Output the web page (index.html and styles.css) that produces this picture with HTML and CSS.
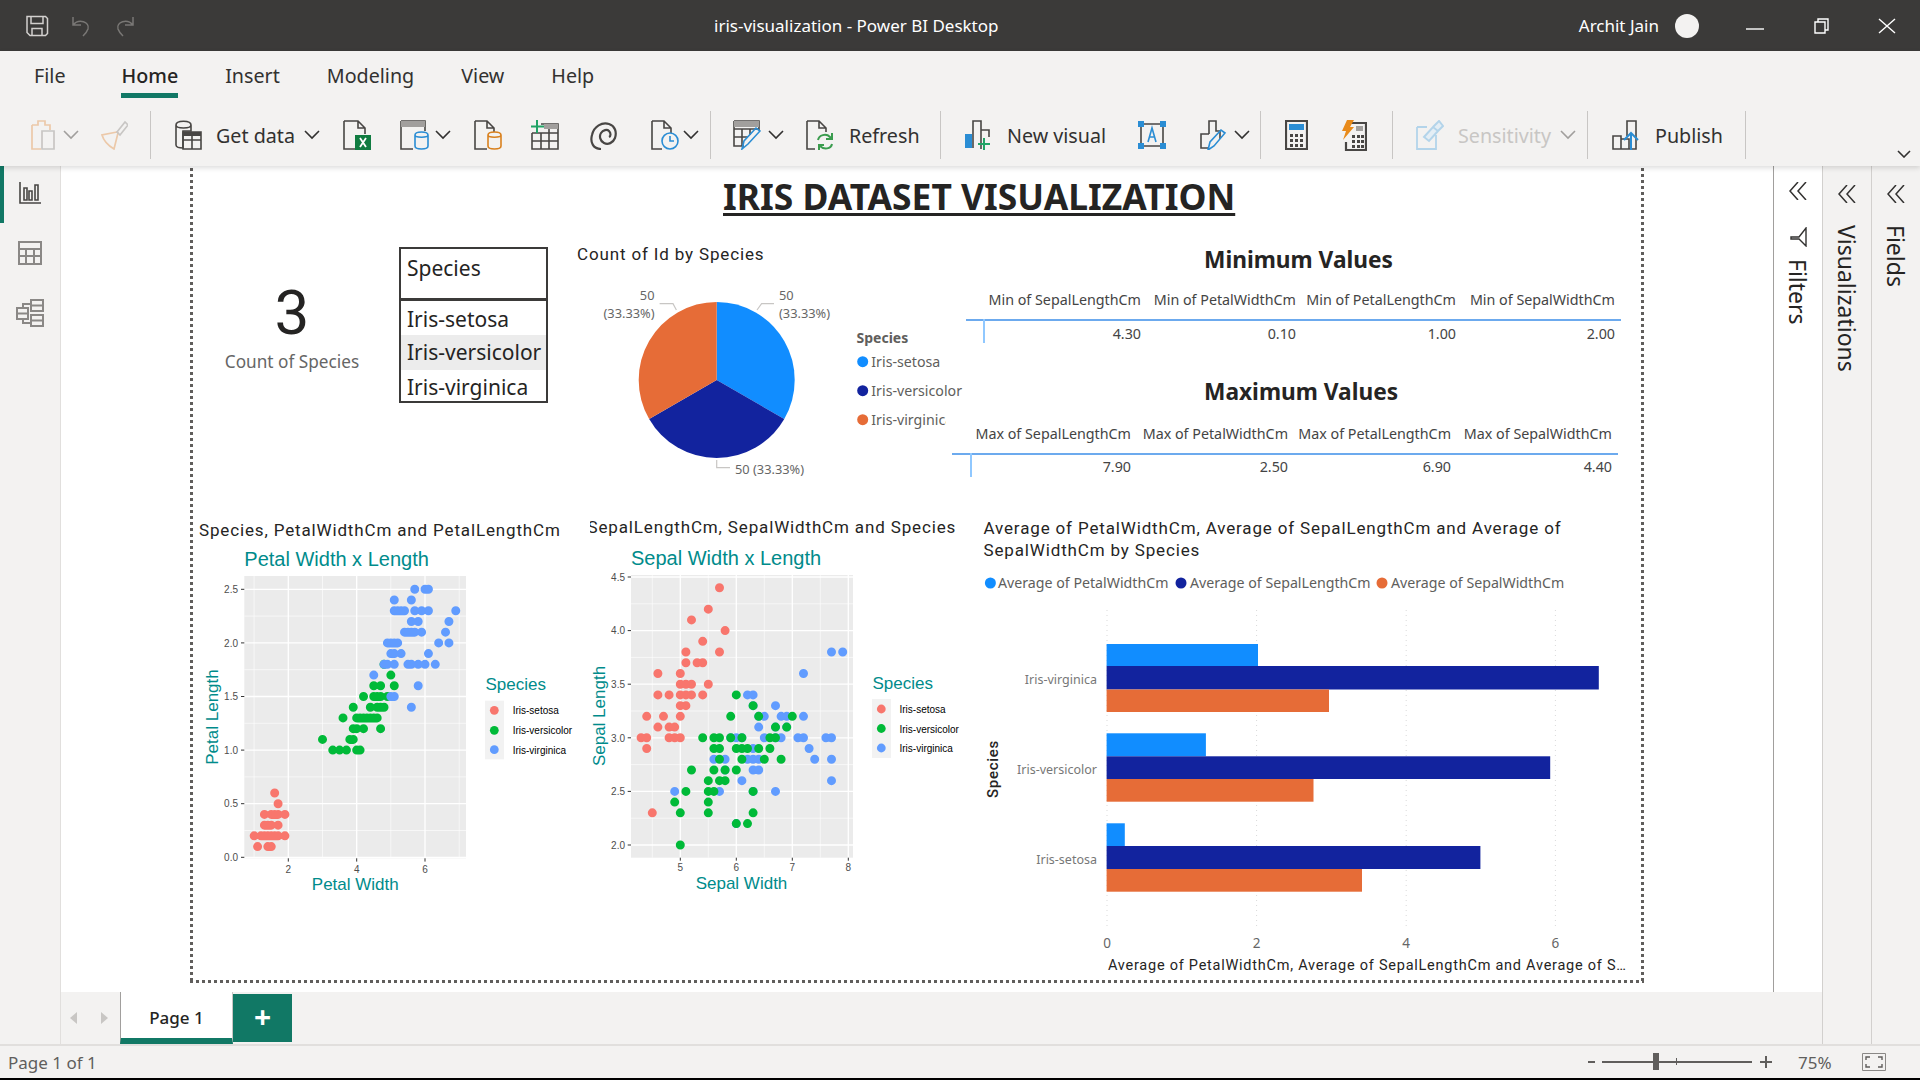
FILE: index.html
```html
<!DOCTYPE html>
<html lang="en">
<head>
<meta charset="utf-8">
<title>iris-visualization - Power BI Desktop</title>
<link rel="stylesheet" href="styles.css">
</head>
<body>
<div class="app">
  <header class="titlebar">
    <div class="qat">
      <svg class="ic-save" width="24" height="22" viewBox="0 0 24 22"><path d="M2 1.5h18.500l2 2v15l-2 2H5l-3-3z M6 1.500v7h12v-7 M7 20.500v-7h10v7" /></svg>
      <svg class="ic-undo" width="22" height="22" viewBox="0 0 22 22"><path d="M2 2v8h8M2 10c6-7 17-3 15 4-1 3-3 5-5 7"/></svg>
      <svg class="ic-redo" width="22" height="22" viewBox="0 0 22 22"><path d="M20 2v8h-8M20 10c-6-7-17-3-15 4 1 3 3 5 5 7"/></svg>
    </div>
    <div class="doc-title">iris-visualization - Power BI Desktop</div>
    <div class="account">
      <span class="user">Archit Jain</span>
      <span class="avatar"></span>
      <svg class="win win-min" width="18" height="4" viewBox="0 0 18 4"><path d="M0 2h18"/></svg>
      <svg class="win win-res" width="18" height="16" viewBox="0 0 18 16"><path d="M3 4h10v11H3zM6 4V1h10v11h-3"/></svg>
      <svg class="win win-close" width="18" height="16" viewBox="0 0 18 16"><path d="M1 1l16 14M17 1L1 15"/></svg>
    </div>
  </header>

  <section class="ribbon">
    <nav class="tabs">
      <span class="tab tab-file">File</span>
      <span class="tab tab-on">Home</span>
      <span class="tab">Insert</span>
      <span class="tab">Modeling</span>
      <span class="tab">View</span>
      <span class="tab">Help</span>
    </nav>
    <div class="toolbar">
      <svg class="m29" width="29" height="30" viewBox="0 0 29 30"><path class="ln-o" d="M3 5h6V1h7v4h5v5M3 5v24h9"/><path class="ln-g" d="M13 11h12v18H13z"/></svg>
      <svg class="chev m5 dim" width="16" height="10" viewBox="0 0 16 10"><path d="M1 1l7 7 7-7"/></svg>
      <svg class="m21" width="28" height="30" viewBox="0 0 28 30"><path class="ln-o" d="M17 12L2 15c2 7 7 11 12 14l4-16z"/><path class="ln-g" d="M17 12l8-10 3 3-8 10z"/></svg>
      <span class="sep m22"></span>

      <svg class="m23" width="28" height="30" viewBox="0 0 28 30"><path class="ln" d="M2 5c0-5 15-5 15 0v6H9v17c-4 0-7-1-7-3zM2 5c0 4 15 4 15 0"/><path class="ln" d="M9 12h18v17H9zM9 20h18M18 12v17"/><path class="fill-d" d="M9 12h18v4H9z"/></svg>
      <span class="lbl m14 l-get">Get data</span>
      <svg class="chev" width="16" height="10" viewBox="0 0 16 10"><path d="M1 1l7 7 7-7"/></svg>
      <svg class="m23" width="28" height="30" viewBox="0 0 28 30"><path class="ln" d="M1 1h14l7 7v6M15 1v7h7M1 1v28h11"/><path class="fill-x" d="M12 15h16v15H12z"/><path class="ln-w" d="M17 18l6 9M23 18l-6 9"/></svg>
      <svg class="m29" width="29" height="30" viewBox="0 0 29 30"><path class="ln" d="M1 1h24v10M1 1v28h12"/><path class="fill-g" d="M1 1h24v6H1z"/><path class="ln-b" d="M15 15c0-4 13-4 13 0v11c0 4-13 4-13 0zM15 15c0 3 13 3 13 0"/></svg>
      <svg class="chev m6" width="16" height="10" viewBox="0 0 16 10"><path d="M1 1l7 7 7-7"/></svg>
      <svg class="m23" width="28" height="30" viewBox="0 0 28 30"><path class="ln" d="M1 1h12l7 7v4M13 1v7h7M1 1v28h12"/><path class="ln-a" d="M14 15c0-4 13-4 13 0v11c0 4-13 4-13 0zM14 15c0 3 13 3 13 0"/></svg>
      <svg class="m29" width="28" height="30" viewBox="0 0 28 30"><path class="ln" d="M10 4h17v25H1V13M1 13h26M1 21h26M10 13v16M18 4v25"/><path class="fill-g" d="M13 4h14v5H13z"/><path class="ln-p" d="M6 0v13M0 6.500h13"/></svg>
      <svg class="m30" width="28" height="30" viewBox="0 0 28 30"><path class="ln2" d="M12 29C4 29 1 22 3 15 5 6 13 2 20 4c6 2 8 8 6 14-2 5-7 7-11 5s-5-7-3-10 6-4 8-2 2 5 0 6"/></svg>
      <svg class="m34" width="28" height="30" viewBox="0 0 28 30"><path class="ln" d="M1 1h12l7 7v5M13 1v7h7M1 1v28h10"/><circle class="ln-b" cx="19" cy="21" r="8"/><path class="ln-b" d="M19 16v5h4"/></svg>
      <svg class="chev m4" width="16" height="10" viewBox="0 0 16 10"><path d="M1 1l7 7 7-7"/></svg>
      <span class="sep m11"></span>

      <svg class="m22" width="28" height="30" viewBox="0 0 28 30"><path class="ln" d="M1 1h25v9M1 1v25h10M1 9h25M1 17h14M9 9v17M17 9v6"/><path class="fill-g" d="M1 1h25v6H1z"/><path class="ln-b" d="M9 29l2-8L23 8l4 3-12 13z"/></svg>
      <svg class="chev m7" width="16" height="10" viewBox="0 0 16 10"><path d="M1 1l7 7 7-7"/></svg>
      <svg class="m22" width="28" height="30" viewBox="0 0 28 30"><path class="ln" d="M1 1h12l7 7v4M13 1v7h7M1 1v28h8"/><path class="ln-gr" d="M12 20c1-5 8-7 12-3l2 2m0-6v6h-6M26 24c-1 5-8 6-12 2l-1-1m0 5v-5h5"/></svg>
      <span class="lbl m15 l-ref">Refresh</span>
      <span class="sep m24"></span>

      <svg class="m23" width="28" height="30" viewBox="0 0 28 30"><path class="ln" d="M9 28V1h8v28M17 10h8v7"/><path class="fill-b" d="M1 14h7v14H1z"/><path class="ln-p" d="M20 18v12M14 24h12"/></svg>
      <span class="lbl m15 l-new">New visual</span>
      <svg class="m31" width="30" height="30" viewBox="0 0 30 30"><path class="ln" d="M4 4h22v22H4z"/><path class="fill-a" d="M1 1h6v6H1zM23 1h6v6h-6zM1 23h6v6H1zM23 23h6v6h-6z"/><path class="ln-b" d="M11 22l4-14 4 14M12.500 17h5"/></svg>
      <svg class="m32" width="28" height="30" viewBox="0 0 28 30"><path class="ln" d="M10 14V1h7v10h4v8M10 14H2v14h8"/><path class="ln-b" d="M9 30l2-8L22 10l4 3-11 13z"/></svg>
      <svg class="chev m7" width="16" height="10" viewBox="0 0 16 10"><path d="M1 1l7 7 7-7"/></svg>
      <span class="sep m10"></span>

      <svg class="m24" width="23" height="30" viewBox="0 0 23 30"><path class="ln2" d="M1 1h21v28H1z"/><path class="fill-a" d="M4 4h15v6H4z"/><path class="dots" d="M5 14h3v3H5zM10 14h3v3h-3zM15 14h3v3h-3zM5 19h3v3H5zM10 19h3v3h-3zM15 19h3v3h-3zM5 24h3v3H5zM10 24h3v3h-3zM15 24h3v3h-3z"/></svg>
      <svg class="m32" width="27" height="31" viewBox="0 0 27 31"><path class="ln2" d="M9 3h17v27H6v-8"/><path class="fill-g" d="M16 6h7v5h-7z"/><path class="dots" d="M12 15h3v3h-3zM17 15h3v3h-3zM21 15h3v3h-3zM12 20h3v3h-3zM17 20h3v3h-3zM21 20h3v3h-3zM12 25h3v3h-3zM17 25h3v3h-3zM21 25h3v3h-3z"/><path class="fill-bolt" d="M7 0h7l-4 7h4L3 20l3-9H2z"/></svg>
      <span class="sep m25"></span>

      <svg class="m23" width="28" height="30" viewBox="0 0 28 30"><path class="ln-sens" d="M1 7h10M1 7v22h19V15"/><path class="ln-sens2" d="M8 17l9-10 5 4-9 10zM17 7l6-6 4 5-5 5"/></svg>
      <span class="lbl lbl-off m14 l-sen">Sensitivity</span>
      <svg class="chev dim" width="16" height="10" viewBox="0 0 16 10"><path d="M1 1l7 7 7-7"/></svg>
      <span class="sep m11"></span>

      <svg class="m24" width="29" height="30" viewBox="0 0 29 30"><path class="ln" d="M1 16h8v13H1zM9 19h8v10H9zM15 16V1h9v28h-7"/><path class="ln-b2" d="M19 30V13M12 20l7-7 7 7"/></svg>
      <span class="lbl m14 l-pub">Publish</span>
      <span class="sep m23"></span>
      <svg class="chev more" width="14" height="8" viewBox="0 0 14 8"><path d="M1 1l6 6 6-6"/></svg>
    </div>
  </section>

  <div class="main">
    <aside class="rail">
      <div class="rail-item rail-on"><svg width="22" height="22" viewBox="0 0 22 22"><path class="ln" d="M1 0v21h21M5 6h3v12H5zM10 9h3v9h-3zM16 3h3v15h-3z"/></svg></div>
      <div class="rail-item"><svg width="24" height="24" viewBox="0 0 24 24"><path class="ln-rail" d="M1 1h22v22H1zM1 8h22M1 15h22M8 8v15M16 8v15"/></svg></div>
      <div class="rail-item"><svg width="28" height="28" viewBox="0 0 28 28"><path class="ln-rail" d="M1 9h11v11H1zM1 14.500h11M15 1h12v11H15zM15 6.500h12M15 16h12v11H15zM15 21.500h12M7 9V5h8M7 20v4h8"/></svg></div>
    </aside>

    <div class="center">
      <div class="upper">
        <main class="canvas">
          <div class="frame"></div>
          <h1 class="report-title">IRIS DATASET VISUALIZATION</h1>

          <div class="card">
            <div class="card-num">3</div>
            <div class="card-cap">Count of Species</div>
          </div>

          <div class="slicer">
            <div class="slicer-head">Species</div>
            <div class="slicer-item">Iris-setosa</div>
            <div class="slicer-item slicer-hover">Iris-versicolor</div>
            <div class="slicer-item">Iris-virginica</div>
          </div>

          <svg class="vis vis-pie" width="400" height="240" viewBox="570 240 400 240">
            <defs><clipPath id="legclip"><rect x="860" y="405" width="86" height="30"/></clipPath></defs>
            <text class="din" x="577" y="260">Count of Id by Species</text>
            <path class="s-blue" d="M716.700 380V302A78 78 0 0 1 784.250 419z"/>
            <path class="s-navy" d="M716.700 380L784.250 419A78 78 0 0 1 649.150 419z"/>
            <path class="s-orange" d="M716.700 380L649.150 419A78 78 0 0 1 716.700 302z"/>
            <path class="leader" d="M757 310l4.600-6.300H774M676.400 310l-3.400-6.300H659.600M716.700 460v7.700H730"/>
            <text class="lab" x="779" y="300">50</text>
            <text class="lab" x="779" y="318">(33.33%)</text>
            <text class="lab end" x="654.500" y="300">50</text>
            <text class="lab end" x="654.500" y="318">(33.33%)</text>
            <text class="lab" x="735" y="474">50 (33.33%)</text>
            <text class="leg-t" x="856.500" y="343">Species</text>
            <circle class="s-blue" cx="862.700" cy="361.700" r="5.500"/>
            <text class="leg" x="871.300" y="366.500">Iris-setosa</text>
            <circle class="s-navy" cx="862.700" cy="390.700" r="5.500"/>
            <text class="leg" x="871.300" y="395.500">Iris-versicolor</text>
            <circle class="s-orange" cx="862.700" cy="419.700" r="5.500"/>
            <text class="leg" x="871.300" y="424.500" clip-path="url(#legclip)">Iris-virginica</text>
          </svg>

          <div class="vtable vt-min">
            <h2 class="vt-title">Minimum Values</h2>
            <div class="vt-grid">
              <span class="th">Min of SepalLengthCm</span><span class="th">Min of PetalWidthCm</span><span class="th">Min of PetalLengthCm</span><span class="th">Min of SepalWidthCm</span>
              <span class="td">4.30</span><span class="td">0.10</span><span class="td">1.00</span><span class="td">2.00</span>
            </div>
          </div>
          <div class="vtable vt-max">
            <h2 class="vt-title">Maximum Values</h2>
            <div class="vt-grid">
              <span class="th">Max of SepalLengthCm</span><span class="th">Max of PetalWidthCm</span><span class="th">Max of PetalLengthCm</span><span class="th">Max of SepalWidthCm</span>
              <span class="td">7.90</span><span class="td">2.50</span><span class="td">6.90</span><span class="td">4.40</span>
            </div>
          </div>

          <svg class="vis vis-s1" width="400" height="390" viewBox="190 510 400 390">
            <text class="din" x="199" y="536">Species, PetalWidthCm and PetalLengthCm</text>
            <text class="gg-title" x="244.300" y="566">Petal Width x Length</text>
            <rect class="panel" x="244.300" y="576" width="221.700" height="282.300"/>
            <path class="g-min" d="M254.100 576v282.300M322.500 576v282.300M390.800 576v282.300M459.200 576v282.300M244.300 830.500h221.700M244.300 776.900h221.700M244.300 723.300h221.700M244.300 669.700h221.700M244.300 616.100h221.700"/>
            <path class="g-maj" d="M288.300 576v282.300M356.700 576v282.300M425 576v282.300M244.300 857.300h221.700M244.300 803.700h221.700M244.300 750.100h221.700M244.300 696.500h221.700M244.300 642.900h221.700M244.300 589.300h221.700"/>
            <path class="tick" d="M241 857.300h3.300M241 803.700h3.300M241 750.100h3.300M241 696.500h3.300M241 642.900h3.300M241 589.300h3.300M288.300 858.300v3.300M356.700 858.300v3.300M425 858.300v3.300"/>
            <g class="tl-y"><text x="238" y="861">0.0</text><text x="238" y="807.300">0.5</text><text x="238" y="753.700">1.0</text><text x="238" y="700">1.5</text><text x="238" y="646.500">2.0</text><text x="238" y="593">2.5</text></g>
            <g class="tl-x"><text x="288.300" y="873">2</text><text x="356.700" y="873">4</text><text x="425" y="873">6</text></g>
            <g transform="translate(220 857.300) scale(3.417 -10.72)">
              <path class="pts p-r" d="M14 2h0M13 2h0M15 2h0M17 4h0M14 3h0M15 1h0M16 2h0M14 1h0M11 1h0M12 2h0M15 4h0M13 4h0M17 3h0M15 3h0M17 2h0M10 2h0M17 5h0M19 2h0M16 4h0M13 3h0M16 6h0M19 4h0"/>
              <path class="pts p-g" d="M47 14h0M45 15h0M49 15h0M40 13h0M46 15h0M45 13h0M47 16h0M33 10h0M46 13h0M39 14h0M35 10h0M42 15h0M40 10h0M36 13h0M44 14h0M41 10h0M39 11h0M48 18h0M47 12h0M43 13h0M48 14h0M50 17h0M38 11h0M37 10h0M39 12h0M51 16h0M45 16h0M47 15h0M44 13h0M41 13h0M46 14h0M40 12h0M42 13h0M42 12h0M30 11h0"/>
              <path class="pts p-b" d="M60 25h0M51 19h0M59 21h0M56 18h0M58 22h0M66 21h0M45 17h0M63 18h0M58 18h0M61 25h0M51 20h0M53 19h0M55 21h0M50 20h0M51 24h0M53 23h0M55 18h0M67 22h0M69 23h0M50 15h0M57 23h0M49 20h0M67 20h0M49 18h0M57 21h0M60 18h0M48 18h0M56 21h0M58 16h0M61 19h0M64 20h0M56 22h0M51 15h0M56 14h0M61 23h0M56 24h0M54 21h0M51 23h0M59 23h0M57 25h0M52 23h0M50 19h0M52 20h0M54 23h0M51 18h0"/>
            </g>
            <text class="gg-axis mid" x="355.300" y="890">Petal Width</text>
            <text class="gg-axis mid" transform="translate(218 717) rotate(-90)">Petal Length</text>
            <text class="gg-axis" x="485.500" y="690">Species</text>
            <rect class="key" x="485" y="700.700" width="19" height="58.600"/>
            <circle class="f-r" cx="494.300" cy="710.300" r="4.400"/><circle class="f-g" cx="494.300" cy="730.300" r="4.400"/><circle class="f-b" cx="494.300" cy="749.700" r="4.400"/>
            <text class="key-l" x="512.700" y="714">Iris-setosa</text><text class="key-l" x="512.700" y="734">Iris-versicolor</text><text class="key-l" x="512.700" y="753.500">Iris-virginica</text>
          </svg>

          <svg class="vis vis-s2" width="400" height="390" viewBox="590 510 400 390">
            <text class="din" x="587.500" y="533">SepalLengthCm, SepalWidthCm and Species</text>
            <text class="gg-title" x="631" y="564.500">Sepal Width x Length</text>
            <rect class="panel" x="631" y="575" width="222" height="282.700"/>
            <path class="g-min" d="M652.300 575v282.700M708.300 575v282.700M764.300 575v282.700M820.300 575v282.700M631 818.200h222M631 764.600h222M631 711h222M631 657.400h222M631 603.800h222"/>
            <path class="g-maj" d="M680.300 575v282.700M736.300 575v282.700M792.300 575v282.700M848.300 575v282.700M631 845h222M631 791.400h222M631 737.800h222M631 684.200h222M631 630.600h222M631 577h222"/>
            <path class="tick" d="M627.700 845h3.300M627.700 791.400h3.300M627.700 737.800h3.300M627.700 684.200h3.300M627.700 630.600h3.300M627.700 577h3.300M680.300 857.700v3M736.300 857.700v3M792.300 857.700v3M848.300 857.700v3"/>
            <g class="tl-y"><text x="625" y="848.700">2.0</text><text x="625" y="795">2.5</text><text x="625" y="741.500">3.0</text><text x="625" y="687.900">3.5</text><text x="625" y="634.300">4.0</text><text x="625" y="580.700">4.5</text></g>
            <g class="tl-x"><text x="680.300" y="871">5</text><text x="736.300" y="871">6</text><text x="792.300" y="871">7</text><text x="848.300" y="871">8</text></g>
            <g transform="translate(400.300 1059.400) scale(5.6 -10.72)">
              <path class="pts p-r" d="M51 35h0M49 30h0M47 32h0M46 31h0M50 36h0M54 39h0M46 34h0M50 34h0M44 29h0M49 31h0M54 37h0M48 34h0M48 30h0M43 30h0M58 40h0M57 44h0M51 38h0M57 38h0M51 37h0M46 36h0M51 33h0M50 30h0M52 35h0M52 34h0M48 31h0M54 34h0M52 41h0M55 42h0M50 32h0M55 35h0M44 30h0M51 34h0M50 35h0M45 23h0M44 32h0M53 37h0M50 33h0"/>
              <path class="pts p-b" d="M63 33h0M58 27h0M71 30h0M63 29h0M65 30h0M76 30h0M49 25h0M73 29h0M67 25h0M72 36h0M65 32h0M64 27h0M68 30h0M57 25h0M58 28h0M64 32h0M77 38h0M77 26h0M60 22h0M69 32h0M56 28h0M77 28h0M63 27h0M67 33h0M72 32h0M62 28h0M61 30h0M64 28h0M72 30h0M74 28h0M79 38h0M63 28h0M61 26h0M77 30h0M63 34h0M64 31h0M60 30h0M69 31h0M67 31h0M68 32h0M67 30h0M63 25h0M62 34h0M59 30h0"/>
              <path class="pts p-g" d="M70 32h0M64 32h0M69 31h0M55 23h0M65 28h0M57 28h0M63 33h0M49 24h0M66 29h0M52 27h0M50 20h0M59 30h0M60 22h0M61 29h0M56 29h0M67 31h0M56 30h0M58 27h0M62 22h0M56 25h0M59 32h0M61 28h0M63 25h0M64 29h0M66 30h0M68 28h0M67 30h0M60 29h0M57 26h0M55 24h0M60 27h0M54 30h0M60 34h0M63 23h0M55 25h0M55 26h0M61 30h0M58 26h0M50 23h0M56 27h0M57 30h0M57 29h0M62 29h0M51 25h0"/>
            </g>
            <text class="gg-axis mid" x="741.500" y="888.500">Sepal Width</text>
            <text class="gg-axis mid" transform="translate(604.500 716) rotate(-90)">Sepal Length</text>
            <text class="gg-axis" x="872.500" y="689">Species</text>
            <rect class="key" x="872" y="699" width="19" height="59"/>
            <circle class="f-r" cx="881.300" cy="709" r="4.400"/><circle class="f-g" cx="881.300" cy="728.500" r="4.400"/><circle class="f-b" cx="881.300" cy="748" r="4.400"/>
            <text class="key-l" x="899.500" y="712.700">Iris-setosa</text><text class="key-l" x="899.500" y="732.500">Iris-versicolor</text><text class="key-l" x="899.500" y="751.700">Iris-virginica</text>
          </svg>

          <svg class="vis vis-bar" width="670" height="470" viewBox="975 510 670 470">
            <text class="din" x="983.500" y="534">Average of PetalWidthCm, Average of SepalLengthCm and Average of</text>
            <text class="din" x="983.500" y="556">SepalWidthCm by Species</text>
            <circle class="s-blue" cx="990.400" cy="583" r="5.500"/><text class="leg" x="998" y="588">Average of PetalWidthCm</text>
            <circle class="s-navy" cx="1181" cy="583" r="5.500"/><text class="leg" x="1190" y="588">Average of SepalLengthCm</text>
            <circle class="s-orange" cx="1382" cy="583" r="5.500"/><text class="leg" x="1391" y="588">Average of SepalWidthCm</text>
            <path class="grid-dot" d="M1107 610v320M1256.600 610v320M1406.200 610v320M1555.400 610v320"/>
            <rect class="s-blue" x="1106.600" y="644" width="151.400" height="22"/>
            <rect class="s-navy" x="1106.600" y="666" width="492.200" height="23.500"/>
            <rect class="s-orange" x="1106.600" y="689.500" width="222.400" height="22.500"/>
            <rect class="s-blue" x="1106.600" y="733.300" width="99.300" height="23"/>
            <rect class="s-navy" x="1106.600" y="756.300" width="443.600" height="22.700"/>
            <rect class="s-orange" x="1106.600" y="779" width="206.900" height="22.700"/>
            <rect class="s-blue" x="1106.600" y="823.300" width="18.200" height="22.700"/>
            <rect class="s-navy" x="1106.600" y="846" width="373.800" height="23"/>
            <rect class="s-orange" x="1106.600" y="869" width="255.400" height="22.700"/>
            <text class="cat end" x="1097" y="684">Iris-virginica</text>
            <text class="cat end" x="1097" y="774">Iris-versicolor</text>
            <text class="cat end" x="1097" y="864">Iris-setosa</text>
            <text class="din din-s mid" transform="translate(997.500 769) rotate(-90)">Species</text>
            <g class="cat num mid"><text x="1107" y="948">0</text><text x="1256.600" y="948">2</text><text x="1406.200" y="948">4</text><text x="1555.400" y="948">6</text></g>
            <text class="din din-a" x="1108" y="970">Average of PetalWidthCm, Average of SepalLengthCm and Average of S…</text>
          </svg>
        </main>

        <aside class="pane pane-filters">
          <svg class="dbl" width="18" height="18" viewBox="0 0 18 18"><path d="M9 0L1 9l8 9M17 0L9 9l8 9"/></svg>
          <svg class="funnel" width="17" height="20" viewBox="0 0 17 20"><path d="M16 1v18L9 12H1v-2h8z"/></svg>
          <span class="vtext vt-f">Filters</span>
        </aside>
      </div>

      <div class="pagebar">
        <div class="pg-nav">
          <svg width="8" height="12" viewBox="0 0 8 12"><path d="M7 0v12L0 6z"/></svg>
          <svg width="8" height="12" viewBox="0 0 8 12"><path d="M0 0v12l7-6z"/></svg>
        </div>
        <div class="pg-tab">Page 1</div>
        <div class="pg-add">+</div>
      </div>
    </div>

    <aside class="pane pane-vis">
      <svg class="dbl" width="18" height="18" viewBox="0 0 18 18"><path d="M9 0L1 9l8 9M17 0L9 9l8 9"/></svg>
      <span class="vtext">Visualizations</span>
    </aside>
    <aside class="pane pane-vis">
      <svg class="dbl" width="18" height="18" viewBox="0 0 18 18"><path d="M9 0L1 9l8 9M17 0L9 9l8 9"/></svg>
      <span class="vtext">Fields</span>
    </aside>
  </div>

  <footer class="status">
    <span class="st-page">Page 1 of 1</span>
    <div class="zoom">
      <span class="z-minus"></span>
      <div class="z-track"><span class="z-mark"></span><span class="z-thumb"></span></div>
      <svg class="z-plus" width="12" height="12" viewBox="0 0 12 12"><path d="M6 0v12M0 6h12"/></svg>
      <span class="z-val">75%</span>
      <svg class="z-fit" width="24" height="18" viewBox="0 0 24 18"><path class="z-box" d="M.500.500h23v17H.500z"/><path class="z-cor" d="M8 4H4v3M16 4h4v3M8 14H4v-3M16 14h4v-3"/></svg>
    </div>
  </footer>
</div>
</body>
</html>
```

FILE: styles.css
```css
html, body { margin: 0; height: 100%; overflow: hidden; background: #f3f2f1; }
body { font-family: "Noto Sans", "Open Sans", sans-serif; color: #252423; }
svg { display: block; flex: none; }
h1, h2 { margin: 0; }

.app { display: flex; flex-direction: column; height: 1080px; }

/* title bar */
.titlebar { position: relative; display: flex; align-items: center; justify-content: space-between; height: 51px; background: #3b3a39; color: #fff; flex: none; }
.qat { display: flex; align-items: center; padding-left: 25px; }
.qat svg { fill: none; stroke-width: 1.5; }
.ic-save { stroke: #d2d0ce; }
.ic-undo { stroke: #797775; margin-left: 22px; }
.ic-redo { stroke: #797775; margin-left: 20px; }
.doc-title { position: absolute; left: 714px; top: 0; line-height: 52px; font-size: 17px; }
.account { display: flex; align-items: center; padding-right: 24px; font-size: 17px; }
.avatar { width: 24px; height: 24px; border-radius: 50%; background: #f3f2f1; margin-left: 16px; }
.win { fill: none; stroke: #fff; stroke-width: 1.4; }
.win-min { margin-left: 47px; margin-top: 6px; }
.win-res { margin-left: 48px; }
.win-close { margin-left: 48px; }

/* ribbon */
.ribbon { height: 115px; flex: none; background: #f3f2f1; box-shadow: 0 2px 5px rgba(0,0,0,.14); position: relative; z-index: 3; }
.tabs { display: flex; height: 60px; box-sizing: border-box; padding: 12px 0 0 34px; font-size: 19.700px; line-height: 26px; }
.tab { margin-right: 47px; height: 30px; color: #323130; }
.tab-file { margin-right: 56px; }
.tab-on { font-weight: 500; border-bottom: 5px solid #117865; color: #252423; }
.toolbar { display: flex; align-items: center; height: 48px; }
.toolbar svg { fill: none; }
.sep { width: 1px; height: 48px; background: #c8c6c4; flex: none; }
.lbl { font-size: 19.700px; line-height: 26px; white-space: nowrap; flex: none; color: #323130; position: relative; top: 1px; }
.lbl-off { color: #c8c6c4; }
.l-get { width: 88px; }
.l-ref { width: 67px; }
.l-new { width: 99px; }
.l-sen { width: 102px; }
.l-pub { width: 67px; }
.chev path { stroke: #323130; stroke-width: 1.6; fill: none; }
.chev.dim path { stroke: #a19f9d; }
.more { margin-left: 151px; margin-top: 38px; }
.m4 { margin-left: 4px; } .m5 { margin-left: 5px; } .m6 { margin-left: 6px; } .m7 { margin-left: 7px; } .m8 { margin-left: 8px; }
.m10 { margin-left: 10px; } .m11 { margin-left: 11px; } .m12 { margin-left: 12px; }
.m14 { margin-left: 14px; } .m15 { margin-left: 15px; }
.m21 { margin-left: 21px; } .m22 { margin-left: 22px; } .m23 { margin-left: 23px; } .m24 { margin-left: 24px; } .m25 { margin-left: 25px; }
.m29 { margin-left: 29px; } .m30 { margin-left: 30px; } .m31 { margin-left: 31px; } .m32 { margin-left: 32px; } .m34 { margin-left: 34px; }

.ln { stroke: #484644; stroke-width: 1.6; fill: none; }
.ln2 { stroke: #484644; stroke-width: 2.2; fill: none; }
.ln-o { stroke: #ecc9a9; stroke-width: 1.7; fill: none; }
.ln-g { stroke: #c8c6c4; stroke-width: 1.7; fill: none; }
.ln-w { stroke: #fff; stroke-width: 1.8; fill: none; }
.ln-b { stroke: #2a8dd4; stroke-width: 1.6; fill: none; }
.ln-b2 { stroke: #2a8dd4; stroke-width: 2; fill: none; }
.ln-a { stroke: #d9811e; stroke-width: 1.6; fill: none; }
.ln-p { stroke: #21a366; stroke-width: 2; fill: none; }
.ln-gr { stroke: #3a9c4e; stroke-width: 2; fill: none; }
.ln-sens { stroke: #b3d4ea; stroke-width: 1.8; fill: none; }
.ln-sens2 { stroke: #b3d4ea; stroke-width: 2; fill: #e4eef5; }
.ln-rail { stroke: #8a8886; stroke-width: 2; fill: none; }
.fill-d { fill: #484644; }
.fill-g { fill: #a19f9d; }
.fill-x { fill: #107c41; }
.fill-b { fill: #2a8dd4; }
.fill-a { fill: #2a8dd4; }
.fill-bolt { fill: #e88a1a; }
.dots { fill: #484644; }

/* main */
.main { flex: 1; display: flex; min-height: 0; }
.rail { width: 61px; box-sizing: border-box; border-right: 1px solid #e1dfdd; flex: none; padding-top: 0; }
.rail-item { height: 60px; display: flex; align-items: center; justify-content: center; border-left: 4px solid transparent; margin-right: 4px; }
.rail-on { border-left-color: #117865; margin-top: -3px; }
.center { flex: 1; display: flex; flex-direction: column; min-width: 0; }
.upper { height: 826px; display: flex; flex: none; }

/* free canvas of the report */
.canvas { position: relative; flex: 1; background: #fff; overflow: hidden; }
.frame { position: absolute; left: 129px; top: -10px; width: 1454px; height: 827px;
  background:
    repeating-linear-gradient(180deg, #605e5c 0 3px, transparent 3px 6px) left top / 3px 100% no-repeat,
    repeating-linear-gradient(180deg, #605e5c 0 3px, transparent 3px 6px) right top / 3px 100% no-repeat,
    repeating-linear-gradient(90deg, #605e5c 0 3px, transparent 3px 6px) left bottom / 100% 3px no-repeat; }
.report-title { position: absolute; left: 662px; top: 6px; font-size: 35.400px; line-height: 48px; font-weight: 700; color: #252423; text-decoration: underline; text-decoration-thickness: 3px; text-underline-offset: 3px; white-space: nowrap; }

.card { position: absolute; left: 100px; top: 110px; width: 262px; display: flex; flex-direction: column; align-items: center; }
.card-num { font-family: Roboto, sans-serif; font-size: 62px; line-height: 74px; color: #252423; }
.card-cap { font-size: 17.200px; line-height: 22px; color: #666; margin-top: 1px; }

.slicer { position: absolute; left: 338px; top: 81px; width: 149px; box-sizing: border-box; border: 2px solid #3b3a39; font-size: 21px; line-height: 34px; height: 156px; }
.slicer-head { height: 52px; box-sizing: border-box; padding: 2px 0 0 6px; border-bottom: 3px solid #3b3a39; margin-bottom: 1px; }
.slicer-item { padding-left: 6px; height: 33px; white-space: nowrap; overflow: hidden; }
.slicer-hover { background: #ececec; height: 35px; line-height: 35px; }

.vis { position: absolute; }
.vis-pie { left: 509px; top: 74px; }
.vis-s1 { left: 129px; top: 344px; }
.vis-s2 { left: 529px; top: 344px; }
.vis-bar { left: 914px; top: 344px; }

.din { font-family: Roboto, sans-serif; font-size: 17px; fill: #252423; letter-spacing: .85px; }
.din-s { font-size: 15px; font-weight: 500; letter-spacing: .7px; }
.din-a { font-size: 14.500px; letter-spacing: .75px; }
.lab { font-size: 12.800px; fill: #666; }
.end { text-anchor: end; }
.mid { text-anchor: middle; }
.leader { fill: none; stroke: #c8c6c4; stroke-width: 1.2; }
.leg { font-size: 14.200px; fill: #605e5c; }
.leg-t { font-size: 14px; font-weight: 700; fill: #605e5c; }
.cat { font-size: 12.500px; fill: #777; }
.num { font-size: 13.500px; fill: #666; }
.s-blue { fill: #118dff; }
.s-navy { fill: #12239e; }
.s-orange { fill: #e66c37; }
.grid-dot { fill: none; stroke: #d9d9d9; stroke-width: 1; stroke-dasharray: 1 4; }

.panel { fill: #ebebeb; }
.g-min { fill: none; stroke: #fff; stroke-width: .6; }
.g-maj { fill: none; stroke: #fff; stroke-width: 1.3; }
.tick { fill: none; stroke: #333; stroke-width: 1; }
.tl-y text, .tl-x text { font-family: "Liberation Sans", Arial, sans-serif; font-size: 10px; fill: #4d4d4d; }
.tl-y text { text-anchor: end; }
.tl-x text { text-anchor: middle; }
.gg-title { font-family: "Liberation Sans", Arial, sans-serif; font-size: 20px; fill: #008b8b; }
.gg-axis { font-family: "Liberation Sans", Arial, sans-serif; font-size: 17px; fill: #008b8b; }
.key { fill: #f2f2f2; }
.key-l { font-family: "Liberation Sans", Arial, sans-serif; font-size: 10px; fill: #000; }
.f-r { fill: #f8766d; } .f-g { fill: #00ba38; } .f-b { fill: #619cff; }
.pts { fill: none; stroke-width: 9; stroke-linecap: round; vector-effect: non-scaling-stroke; }
.p-r { stroke: #f8766d; } .p-g { stroke: #00ba38; } .p-b { stroke: #619cff; }

/* tables on the canvas */
.vtable { position: absolute; }
.vt-title { font-size: 22.700px; line-height: 30px; font-weight: 700; color: #252423; white-space: nowrap; }
.vt-grid { position: relative; display: grid; font-size: 14.300px; line-height: 20px; }
.vt-grid::before { content: ""; position: absolute; top: 29px; width: 2px; height: 24px; background: #90c8ff; }
.th, .td { text-align: right; padding-right: 6px; white-space: nowrap; }
.th { color: #444; padding-bottom: 9px; border-bottom: 2px solid #6caaee; }
.td { color: #444; padding-top: 3px; }
.vt-min { left: 905px; top: 79px; }
.vt-min .vt-title { margin-left: 238px; margin-bottom: 15px; }
.vt-min .vt-grid { grid-template-columns: 181px 155px 160px 159px; }
.vt-min .vt-grid::before { left: 17px; }
.vt-max { left: 891px; top: 211px; }
.vt-max .vt-title { margin-left: 252px; margin-bottom: 17px; }
.vt-max .vt-grid { grid-template-columns: 185px 157px 163px 161px; }
.vt-max .vt-grid::before { left: 18px; }
.vt-max .td { padding-top: 2px; }

/* side panes */
.pane { width: 49px; flex: none; box-sizing: border-box; border-left: 1px solid #d2d0ce; display: flex; flex-direction: column; align-items: center; }
.pane-filters { background: #fff; border-left-color: #a19f9d; padding-top: 16px; }
.pane-vis { background: #f3f2f1; padding-top: 19px; }
.dbl path { fill: none; stroke: #323130; stroke-width: 1.5; }
.funnel { margin-top: 27px; }
.funnel path { fill: none; stroke: #323130; stroke-width: 1.4; }
.vtext { writing-mode: vertical-rl; font-size: 23px; line-height: 28px; margin-top: 22px; color: #252423; }
.vt-f { margin-top: 12px; }

/* page tabs */
.pagebar { flex: 1; display: flex; align-items: flex-start; }
.pg-nav { width: 59px; height: 52px; display: flex; align-items: center; justify-content: space-between; box-sizing: border-box; padding: 0 11px 0 9px; }
.pg-nav path { fill: #c8c6c4; }
.pg-tab { width: 113px; height: 52px; box-sizing: border-box; background: #fff; border-left: 1px solid #a19f9d; border-right: 1px solid #c8c6c4; border-bottom: 6px solid #117865; text-align: center; font-size: 17px; font-weight: 500; line-height: 52px; }
.pg-add { width: 59px; height: 48px; margin-top: 2px; background: #117865; color: #fff; text-align: center; font-size: 30px; font-weight: 700; line-height: 46px; }

/* status */
.status { height: 36px; flex: none; box-sizing: border-box; border-top: 2px solid #e1dfdd; border-bottom: 2px solid #000; display: flex; align-items: center; justify-content: space-between; padding: 0 34px 0 8px; background: #f3f2f1; }
.st-page { font-size: 17px; color: #605e5c; }
.zoom { display: flex; align-items: center; }
.z-minus { width: 7px; height: 2px; background: #605e5c; }
.z-track { position: relative; width: 150px; height: 1.500px; margin-left: 7px; background: #605e5c; }
.z-mark { position: absolute; left: 74px; top: -3px; width: 1px; height: 7px; background: #605e5c; }
.z-thumb { position: absolute; left: 51px; top: -8px; width: 6px; height: 17px; background: #605e5c; }
.z-plus { margin-left: 8px; }
.z-plus path { fill: none; stroke: #605e5c; stroke-width: 2; }
.z-val { margin-left: 26px; width: 64px; font-size: 17px; color: #605e5c; }
.z-box { fill: none; stroke: #8a8886; stroke-width: 1; }
.z-cor { fill: none; stroke: #605e5c; stroke-width: 1.4; }
```
